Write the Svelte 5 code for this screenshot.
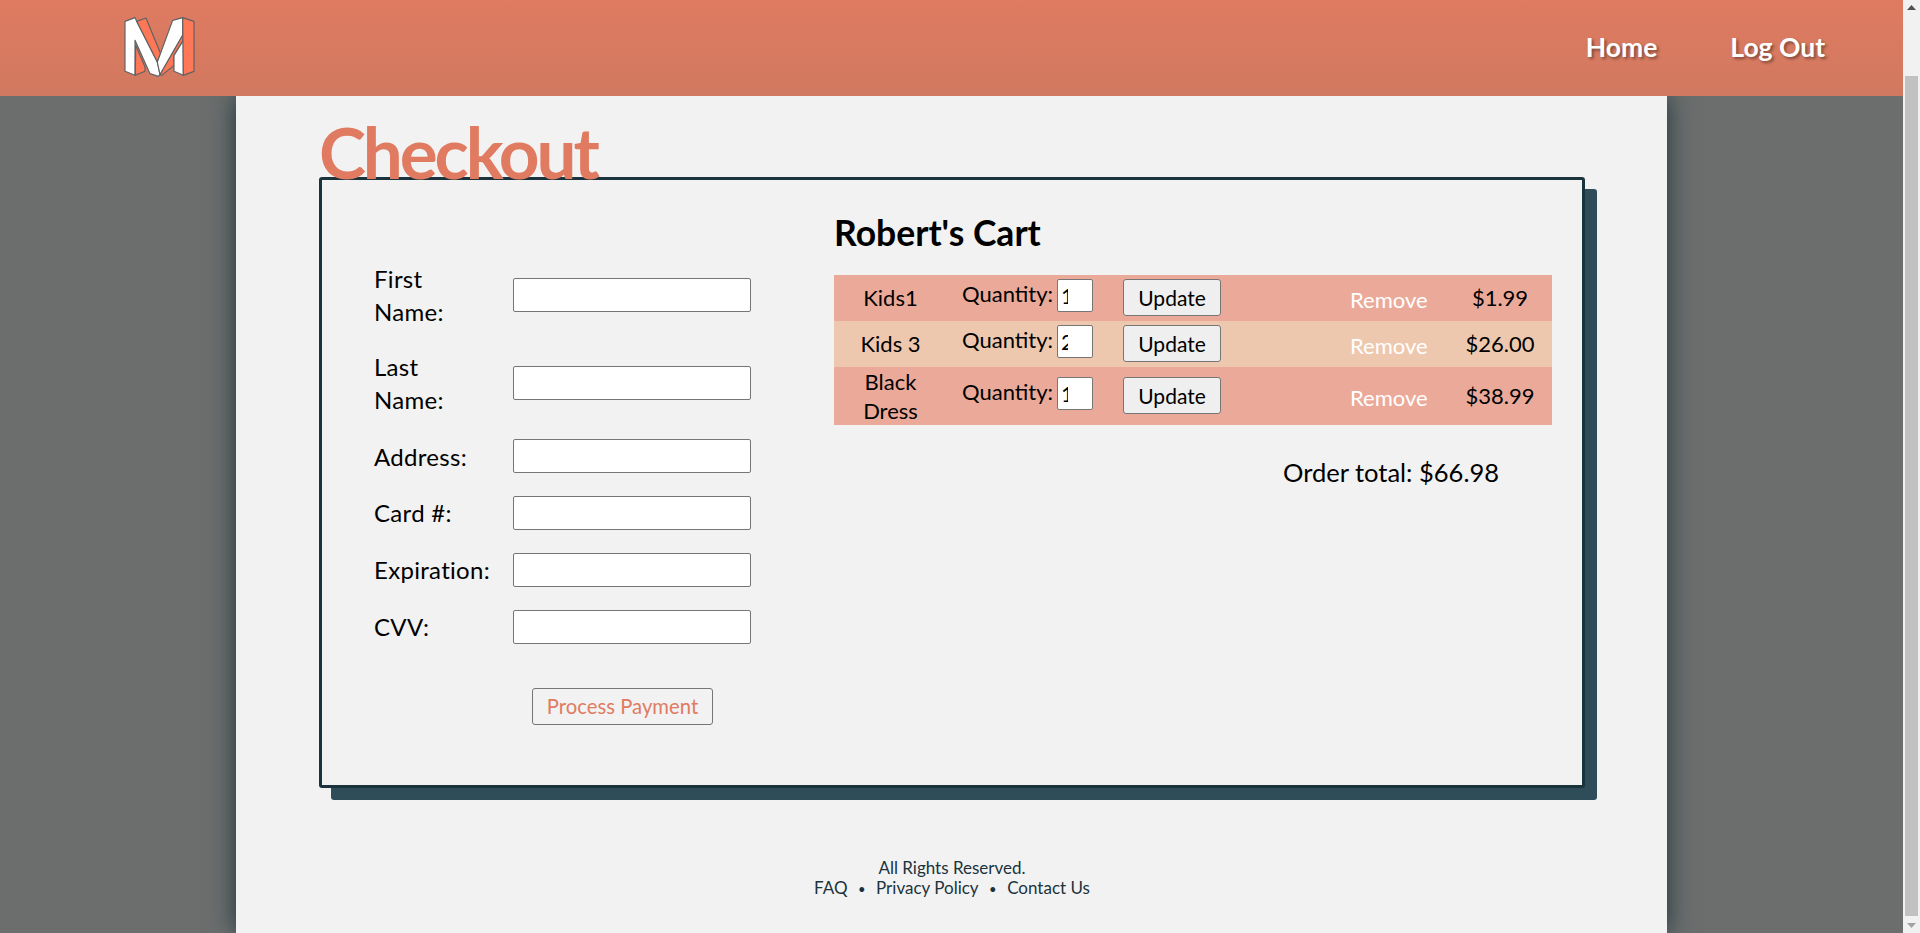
<script>
	let items = [
		{ name: ['Kids1'], qty: 1, price: '$1.99' },
		{ name: ['Kids 3'], qty: 2, price: '$26.00' },
		{ name: ['Black', 'Dress'], qty: 1, price: '$38.99' }
	];
	let fields = [
		{ id: 'first', label: 'First Name:' },
		{ id: 'last', label: 'Last Name:' },
		{ id: 'address', label: 'Address:' },
		{ id: 'card', label: 'Card #:' },
		{ id: 'exp', label: 'Expiration:' },
		{ id: 'cvv', label: 'CVV:' }
	];
</script>

<div class="shell">
	<div class="page">
		<nav>
			<a class="logo" href="#home" aria-label="Home">
				<svg width="80" height="70" viewBox="0 0 240 210">
					<g stroke="#5f6263" stroke-width="3.5" stroke-linejoin="round">
						<path fill="#fff" d="M15 28 45 17 50 28 112 150 120 188 115 193 90 185 45 85 45 190 15 178Z" />
						<path fill="#fe7757" d="M50 28 78 18 122 125 112 150Z" />
						<path fill="#fe7757" d="M47 100 75 165 75 178 46 190Z" />
						<path fill="#fff" d="M158 25 188 17 188 70 120 188 112 150Z" />
						<path fill="#fe7757" d="M188 70 190 85 162 130 162 160 125 190 120 188Z" />
						<path fill="#fff" d="M162 130 190 85 190 190 162 178Z" />
						<path fill="#fe7757" d="M188 17 222 28 222 178 190 190Z" />
					</g>
				</svg>
			</a>
			<div class="links">
				<a href="#home">Home</a>
				<a href="#logout">Log Out</a>
			</div>
		</nav>

		<main>
			<h1>Checkout</h1>
			<section class="card">
				<form>
					<div class="fields">
						{#each fields as f}
							<label for={f.id}>{f.label}</label>
							<input id={f.id} type="text" />
						{/each}
					</div>
					<button class="pay" type="button">Process Payment</button>
				</form>
				<div class="cart">
					<h2>Robert's Cart</h2>
					<div class="rows">
						{#each items as item}
							<div class="row">
								<div class="name">
									{#each item.name as line}
										<div>{line}</div>
									{/each}
								</div>
								<div class="qty">
									<span>Quantity:</span>
									<input type="number" value={item.qty} />
								</div>
								<button type="button">Update</button>
								<a class="remove" href="#remove">Remove</a>
								<div class="price">{item.price}</div>
							</div>
						{/each}
					</div>
					<p class="total">Order total: $66.98</p>
				</div>
			</section>
			<footer>
				<div>All Rights Reserved.</div>
				<div class="foot-links">
					<a href="#faq">FAQ</a><span>•</span><a href="#privacy">Privacy Policy</a><span>•</span><a href="#contact">Contact Us</a>
				</div>
			</footer>
		</main>
	</div>

	<div class="scrollbar">
		<svg class="arrow" width="17" height="17" viewBox="0 0 17 17"><path d="M4 10 8.5 5 13 10Z" fill="#505050" /></svg>
		<div class="track"><div class="thumb"></div></div>
		<svg class="arrow" width="17" height="17" viewBox="0 0 17 17"><path d="M4 7 8.5 12 13 7Z" fill="#a3a3a3" /></svg>
	</div>
</div>

<style>
:global(body) {
	margin: 0;
	font-family: "Lato", "Noto Sans", sans-serif;
	background: #6c6e6d;
	color: #000;
}

.shell {
	display: flex;
	height: 933px;
	overflow: hidden;
}

.page {
	flex: 1;
	min-width: 0;
	display: flex;
	flex-direction: column;
}

nav {
	height: 96px;
	flex: none;
	display: flex;
	align-items: center;
	justify-content: space-between;
	padding: 0 78px 0 120px;
	background: linear-gradient(#de7b61, #d17960);
	position: relative;
	z-index: 2;
}

.logo {
	display: block;
	height: 70px;
	margin-bottom: 2px;
}

.links {
	display: flex;
	gap: 73px;
	padding-bottom: 2px;
}

.links a {
	color: #fff;
	text-decoration: none;
	font-size: 26.5px;
	font-weight: 700;
	text-shadow: 2px 2px 3px rgba(0, 0, 0, 0.4);
}

main {
	flex: 1;
	width: 1431px;
	margin: 0 auto;
	box-sizing: border-box;
	padding: 0 82px 0 83px;
	background: #f2f2f2;
	box-shadow: 0 0 24px #1b333d;
}

h1 {
	position: relative;
	z-index: 1;
	height: 81px;
	margin: 15px 0 -15px 0;
	font-size: 71px;
	line-height: 81px;
	letter-spacing: -3.1px;
	font-weight: 700;
	color: #e07b61;
}

.card {
	display: flex;
	height: 611px;
	box-sizing: border-box;
	border: 3px solid #1b333d;
	border-radius: 3px;
	background: #f2f2f2;
	box-shadow: 12px 12px 0 #2f4d58;
}

form {
	width: 512px;
	flex: none;
	box-sizing: border-box;
	padding: 81.6px 0 0 52px;
}

.fields {
	display: grid;
	grid-template-columns: 139px 238px;
	row-gap: 22.8px;
	align-items: center;
}

.fields label {
	font-size: 24px;
	line-height: 33px;
	letter-spacing: 0.3px;
	width: 90px;
}

.fields input {
	box-sizing: border-box;
	width: 238px;
	height: 34px;
	border: 1px solid #767676;
	border-radius: 2px;
	background: #fff;
}

button {
	font-family: inherit;
	font-size: 21px;
	height: 37px;
	box-sizing: border-box;
	padding: 0;
	background: #efefef;
	border: 1px solid #767676;
	border-radius: 3px;
	color: #000;
}

.pay {
	display: block;
	width: 181px;
	margin: 44px 0 0 158px;
	font-size: 20.3px;
	color: #e07b61;
	background: #f2f2f2;
}

.cart {
	width: 718px;
	flex: none;
}

h2 {
	margin: 29px 0 18px;
	font-size: 35.5px;
	line-height: 48px;
	font-weight: 700;
}

.row {
	display: flex;
	align-items: center;
	box-sizing: border-box;
	height: 46px;
	padding-bottom: 2px;
	font-size: 22px;
	background: #ebaa99;
}

.row:nth-child(2) {
	background: #eec8ae;
}

.row:last-child {
	height: 58px;
}

.row:last-child .name {
	margin-top: 2px;
}

.name {
	width: 113px;
	flex: none;
	text-align: center;
	line-height: 29px;
}

.qty {
	display: flex;
	align-items: flex-start;
	gap: 3px;
	width: 146px;
	margin-left: 15px;
	flex: none;
	padding-bottom: 4px;
}

.qty span {
	width: 92px;
	line-height: 30px;
	white-space: nowrap;
}

.qty input {
	box-sizing: border-box;
	width: 36px;
	height: 33px;
	padding: 1px 24px 1px 3px;
	font-family: inherit;
	font-size: 22px;
	border: 1px solid #767676;
	border-radius: 2px;
	background: #fff;
}

.qty input::-webkit-inner-spin-button {
	-webkit-appearance: none;
}

.row button {
	width: 98px;
	margin-left: 15px;
	flex: none;
}

.remove {
	width: 76px;
	margin: 4px 22px 0 auto;
	text-align: center;
	color: #fff;
	text-decoration: none;
}

.price {
	width: 104px;
	flex: none;
	text-align: center;
}

.total {
	margin: 32px 53px 0 0;
	text-align: right;
	font-size: 25.5px;
	line-height: 30px;
}

footer {
	margin-top: 70px;
	text-align: center;
	font-size: 17px;
	line-height: 20px;
	color: #1b333d;
}

footer a {
	color: inherit;
	text-decoration: none;
}

.foot-links span {
	margin: 0 10.5px;
	font-size: 13px;
}

.scrollbar {
	width: 17px;
	flex: none;
	display: flex;
	flex-direction: column;
	background: #f1f1f1;
}

.arrow {
	flex: none;
	display: block;
}

.track {
	flex: 1;
	display: flex;
	flex-direction: column;
	justify-content: flex-end;
	padding: 0 2px;
}

.thumb {
	height: 840px;
	background: #c1c1c1;
}
</style>
